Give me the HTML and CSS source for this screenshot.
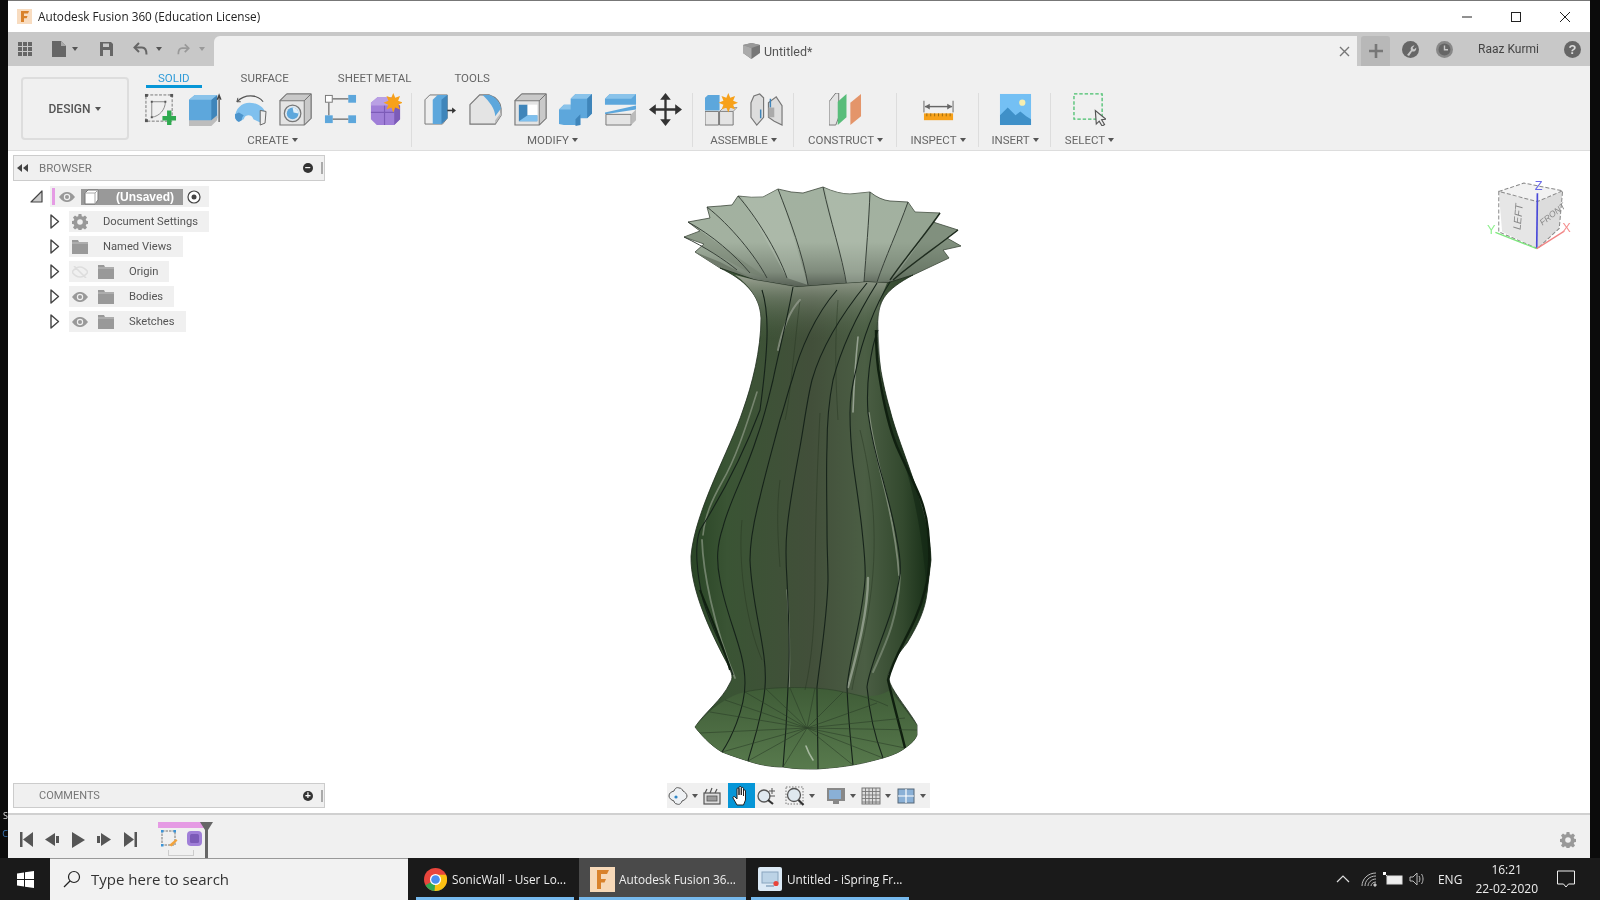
FILE: index.html
```html
<!DOCTYPE html>
<html lang="en">
<head>
  <meta charset="UTF-8" />
  <title>Autodesk Fusion 360 (Education License)</title>
  <link rel="stylesheet" href="styles.css">
</head>
<body>
  <svg class="sprites" width="0" height="0">
    <symbol id="eye" viewBox="0 0 16 10">
      <path d="M0 5C3 1 5.500 0 8 0s5 1 8 5c-3 4-5.500 5-8 5S3 9 0 5z" fill="#999"/>
      <circle cx="8" cy="5" r="3.200" fill="#f0f0f0"/>
      <circle cx="8" cy="5" r="2" fill="#999"/>
    </symbol>
    <symbol id="folder" viewBox="0 0 16 14">
      <path d="M0 0h6l1 2h9v12H0z" fill="#999"/>
      <path d="M0 3h16" stroke="#ccc" stroke-width=".8"/>
    </symbol>
    <symbol id="arrow" viewBox="0 0 10 15">
      <path d="M1 1l7.500 6.500L1 14z" fill="#fff" stroke="#444" stroke-width="1.400" stroke-linejoin="round"/>
    </symbol>
    <symbol id="gear" viewBox="0 0 16 16">
      <path d="M6.600 0h2.800l.4 2.200 1.300.6 1.900-1.300 2 2-1.300 1.900.6 1.300 2.200.4v2.800l-2.200.4-.6 1.300 1.300 1.900-2 2-1.900-1.300-1.300.6-.4 2.200H6.600l-.4-2.200-1.300-.6L3 15.500l-2-2 1.300-1.900-.6-1.300L-.5 9.900V7.100l2.200-.4.6-1.300L1 3.500l2-2 1.900 1.300 1.300-.6z" fill="#999"/>
      <circle cx="8" cy="8" r="2.800" fill="#f0f0f0"/>
    </symbol>
  </svg>

  <div class="desktop">
    <div class="strip strip-left"><span class="strip-s">S</span><span class="strip-c">C</span></div>
    <div class="window">
      <div class="titlebar">
        <svg class="app-icon" width="15" height="15" viewBox="0 0 15 15">
          <rect width="15" height="15" fill="#f8dcc0"/>
          <path d="M4 2h8l-1 2.500H7v2.500h3.500l-.8 2.300H7V13H4z" fill="#d9822b"/>
        </svg>
        <span class="title-text">Autodesk Fusion 360 (Education License)</span>
        <div class="win-controls">
          <svg width="12" height="12" viewBox="0 0 12 12"><path d="M1 6h10" stroke="#222"/></svg>
          <svg width="12" height="12" viewBox="0 0 12 12"><rect x="1.500" y="1.500" width="9" height="9" fill="none" stroke="#222"/></svg>
          <svg width="12" height="12" viewBox="0 0 12 12"><path d="M1 1l10 10M11 1L1 11" stroke="#222"/></svg>
        </div>
      </div>

      <div class="tabbar">
        <div class="quick">
          <svg class="q-grid" width="14" height="14" viewBox="0 0 14 14" fill="#666">
            <rect width="4" height="4"/><rect x="5" width="4" height="4"/><rect x="10" width="4" height="4"/>
            <rect y="5" width="4" height="4"/><rect x="5" y="5" width="4" height="4"/><rect x="10" y="5" width="4" height="4"/>
            <rect y="10" width="4" height="4"/><rect x="5" y="10" width="4" height="4"/><rect x="10" y="10" width="4" height="4"/>
          </svg>
          <svg class="q-doc" width="14" height="16" viewBox="0 0 14 16"><path d="M0 0h9l5 5v11H0z" fill="#666"/><path d="M9 0v5h5" fill="#aaa"/></svg>
          <i class="caret"></i>
          <svg class="q-save" width="13" height="14" viewBox="0 0 13 14"><path d="M0 0h11l2 2v12H0z" fill="#666"/><rect x="3" y="1.500" width="6" height="3.500" fill="#c8c8c8"/><rect x="3" y="8" width="7" height="6" fill="#c8c8c8"/></svg>
          <svg class="q-undo" width="15" height="14" viewBox="0 0 15 14"><path d="M6 1L1.500 5.500 6 10" fill="none" stroke="#666" stroke-width="2"/><path d="M2 5.500h7c3 0 4.500 2.500 4.500 7" fill="none" stroke="#666" stroke-width="2"/></svg>
          <i class="caret caret-undo"></i>
          <svg class="q-redo" width="13" height="13" viewBox="0 0 15 14"><path d="M9 1l4.500 4.500L9 10" fill="none" stroke="#999" stroke-width="2"/><path d="M13 5.500H6c-3 0-4.500 2.500-4.500 7" fill="none" stroke="#999" stroke-width="2"/></svg>
          <i class="caret caret-light"></i>
        </div>
        <div class="doc-tab">
          <svg width="17" height="16" viewBox="0 0 17 16"><path d="M0 2l8.500-2L17 2v8l-8.500 6L0 10z" fill="#777"/><path d="M0 2l8.500 3L17 2l-8.500-2z" fill="#999"/><path d="M0 2l8.500 3v11L0 10z" fill="#aaa"/></svg>
          <span class="doc-name">Untitled*</span>
          <svg class="doc-close" width="11" height="11" viewBox="0 0 11 11"><path d="M1 1l9 9M10 1l-9 9" stroke="#777" stroke-width="1.400"/></svg>
        </div>
        <div class="new-tab">
          <svg width="14" height="14" viewBox="0 0 14 14"><path d="M7 0v14M0 7h14" stroke="#777" stroke-width="2.600"/></svg>
        </div>
        <svg class="user-icon first" width="17" height="17" viewBox="0 0 17 17"><circle cx="8.500" cy="8.500" r="8.500" fill="#666"/><path d="M5 14l4-5c-1-2 .5-4.500 3.500-4.500L10.500 7l1.500 1.500 2.300-2C14.500 10 12 11 10 10.500L7 15z" fill="#c8c8c8"/></svg>
        <svg class="user-icon" width="17" height="17" viewBox="0 0 17 17"><circle cx="8.500" cy="8.500" r="8.500" fill="#888"/><circle cx="8.500" cy="8.500" r="6" fill="#666"/><path d="M8.500 4.500v4.300h3.500" fill="none" stroke="#c8c8c8" stroke-width="1.400"/></svg>
        <span class="user-name">Raaz Kurmi</span>
        <span class="help">?</span>
      </div>

      <div class="ribbon">
        <button class="design-btn">DESIGN<i class="caret"></i></button>
        <div class="ribbon-main">
          <div class="ribbon-tabs">
            <span class="ribbon-tab active">SOLID</span>
            <span class="ribbon-tab tab-surface">SURFACE</span>
            <span class="ribbon-tab tab-sheet">SHEET METAL</span>
            <span class="ribbon-tab tab-tools">TOOLS</span>
          </div>
          <div class="groups">
            <div class="group group-create">
              <div class="tools">
                <svg class="tool" viewBox="0 0 34 34">
                  <rect x="2" y="2" width="27" height="27" fill="none" stroke="#777" stroke-width="1" stroke-dasharray="3 1.500"/>
                  <path d="M8 9h14v0C22 17 16 24 8 25z" fill="none" stroke="#888" stroke-width="1"/>
                  <g fill="#555"><rect x="1" y="1" width="3" height="3"/><rect x="27" y="1" width="3" height="3"/><rect x="1" y="27" width="3" height="3"/><rect x="7" y="8" width="2" height="2"/><rect x="21" y="8" width="2" height="2"/><rect x="7" y="24" width="2" height="2"/></g>
                  <path d="M26 18v15M19 26h14" stroke="#2eaa4f" stroke-width="4.500"/>
                </svg>
                <svg class="tool" viewBox="0 0 34 34">
                  <path d="M0 7l6-5h23v24l-6 5H0z" fill="#5da7dc"/>
                  <path d="M23 7l6-5v24l-6 5z" fill="#3f85ba"/>
                  <path d="M0 7l6-5h23l-6 5z" fill="#8ac3ea"/>
                  <path d="M0 28h23l6-5v5l-6 6H0z" fill="#bdbdbd"/>
                  <path d="M31 30V3M29 7l2-5 2 5" fill="none" stroke="#444" stroke-width="1.200"/>
                </svg>
                <svg class="tool" viewBox="0 0 34 34">
                  <path d="M1 26c0-10 7-16 15-16s15 5 16 10l-4 11-8-4c-1-3-3-4-5-4s-4 1-5 4l-5 2z" fill="#7fc0ee"/>
                  <path d="M1 22c0 3 0 6 4 8l3-2c0-2 1-4 2-5l-5-3z" fill="#4c94cc"/>
                  <path d="M27 18l6 1-1 12-5 2z" fill="#eee" stroke="#666"/>
                  <path d="M3 9C8 4 12 3 17 3s10 2 13 6" fill="none" stroke="#555" stroke-width="1.200"/>
                  <path d="M3 9l1-4M3 9l4 0" stroke="#555" stroke-width="1"/>
                </svg>
                <svg class="tool" viewBox="0 0 34 34">
                  <path d="M1 8l7-7h25v25l-7 7H1z" fill="#e4e4e4" stroke="#777" stroke-width="1.200"/>
                  <path d="M26 8l7-7v25l-7 7zM1 8l7-7h25l-7 7z" fill="#c9c9c9" stroke="#777" stroke-width="1"/>
                  <circle cx="14" cy="21" r="8.500" fill="#dfe8ef" stroke="#777" stroke-width="1.300"/>
                  <circle cx="14" cy="21" r="6" fill="#5da7dc"/>
                  <path d="M14 15a6 6 0 0 1 6 6l-5-1z" fill="#e0eef8"/>
                </svg>
                <svg class="tool" viewBox="0 0 34 34">
                  <rect x="1.500" y="2.500" width="7" height="7" fill="#fff" stroke="#777"/>
                  <rect x="25" y="2" width="8" height="8" fill="#5da7dc"/>
                  <rect x="1" y="23" width="8" height="8" fill="#5da7dc"/>
                  <rect x="25" y="23" width="8" height="8" fill="#5da7dc"/>
                  <path d="M9 6h16M5 10v13M9 27h16" stroke="#666" stroke-width="1.200"/>
                </svg>
                <svg class="tool" viewBox="0 0 34 34">
                  <path d="M2 10l7-6h14l9 9v14l-6 6H8l-6-6z" fill="#a07fd8"/>
                  <path d="M2 20h24M16 10v23" stroke="#7c5bb8" stroke-width="1.200"/>
                  <path d="M26 13l6 0v14l-6 6z" fill="#7c5bb8"/>
                  <path d="M2 10l7-6h14l3 9H2z" fill="#b9a0e4"/>
                  <path d="M25 0l2 5 5-2-2 5 5 2-5 2 2 5-5-2-2 5-2-5-5 2 2-5-5-2 5-2-2-5 5 2z" fill="#f7a11a"/>
                </svg>
              </div>
              <div class="group-label">CREATE<i class="caret"></i></div>
            </div>
            <div class="group group-modify">
              <div class="tools">
                <svg class="tool" viewBox="0 0 34 34">
                  <path d="M1 7l5-5h18v24l-5 6H1z" fill="#eee" stroke="#777"/>
                  <path d="M9 7l5-5h10v24l-6 6H9z" fill="#5da7dc"/>
                  <path d="M18 7l6-5v24l-6 6z" fill="#3f85ba"/>
                  <path d="M24 18h7" stroke="#333" stroke-width="1.600"/><path d="M29 15l4 3-4 3z" fill="#333"/>
                </svg>
                <svg class="tool" viewBox="0 0 34 34">
                  <path d="M1 12L11 2h10c7 2 12 8 12 14v7l-6 9H1z" fill="#e4e4e4" stroke="#777" stroke-width="1.200"/>
                  <path d="M14 2h7c6 2 11 7 12 14l-6 8c0-8-6-15-13-22z" fill="#5da7dc"/>
                  <path d="M27 32l6-9v-3l-6 8z" fill="#bbb"/>
                </svg>
                <svg class="tool" viewBox="0 0 34 34">
                  <path d="M1 8l7-7h25v25l-7 7H1z" fill="#e4e4e4" stroke="#777" stroke-width="1.200"/>
                  <path d="M26 8l7-7v25l-7 7zM1 8l7-7h25l-7 7z" fill="#c9c9c9" stroke="#777" stroke-width="1"/>
                  <path d="M5 12h9v11h10v6H5z" fill="#3f85ba"/>
                  <rect x="14" y="12" width="10" height="11" fill="#fff"/>
                  <path d="M5 29l9-6h10v6z" fill="#7fc0ee"/>
                </svg>
                <svg class="tool" viewBox="0 0 34 34">
                  <path d="M12 6l5-5h17v20l-5 5H22v7H5l-5-1V17l5-5h7z" fill="#5da7dc"/>
                  <path d="M12 6l5-5h17l-5 5zM0 17l5-5h7v5z" fill="#8ac3ea"/>
                  <path d="M29 6l5-5v20l-5 5zM17 27l5-5v11l-5 1z" fill="#3f85ba"/>
                </svg>
                <svg class="tool" viewBox="0 0 34 34">
                  <path d="M1 6l5-5h22l5 0v11H1z" fill="#5da7dc"/>
                  <path d="M1 6l5-5h27l-5 5z" fill="#8ac3ea"/>
                  <path d="M1 20l32-7v4L1 22z" fill="#5da7dc"/>
                  <path d="M2 22h26v11H2z" fill="#e4e4e4" stroke="#777"/>
                  <path d="M28 22l5-5v11l-5 5z" fill="#bbb"/>
                </svg>
                <svg class="tool" viewBox="0 0 34 34" fill="#333">
                  <path d="M15.800 6h2.400v22h-2.400zM6 15.800h22v2.400H6z"/>
                  <path d="M17 0l5.500 7h-11zM17 34l-5.500-7h11zM0 17l7-5.500v11zM34 17l-7 5.500v-11z"/>
                </svg>
              </div>
              <div class="group-label">MODIFY<i class="caret"></i></div>
            </div>
            <div class="group group-assemble">
              <div class="tools">
                <svg class="tool" viewBox="0 0 34 34">
                  <path d="M0 5l3-3h12v16H0z" fill="#5da7dc"/>
                  <path d="M0 19h14v14H0zM15 19h14v14H15z" fill="#e4e4e4" stroke="#777"/>
                  <path d="M15 19l4-4h14l-4 4z" fill="#ddd" stroke="#777" stroke-width=".7"/>
                  <path d="M24 0l2 5 5-2-2 5 5 2-5 2 2 5-5-2-2 5-2-5-5 2 2-5-5-2 5-2-2-5 5 2z" fill="#f7a11a"/>
                </svg>
                <svg class="tool" viewBox="0 0 34 34">
                  <path d="M1 10l3-7 6-2 4 4v20L7 33 1 25z" fill="#ddd" stroke="#777" stroke-width="1.200"/>
                  <path d="M19 10l8-6 6 9v20l-8-4-6-4z" fill="#ddd" stroke="#777" stroke-width="1.200"/>
                  <path d="M11 17v9M21 6v9" stroke="#3f85ba" stroke-width="1.500"/>
                  <rect x="19" y="15" width="6" height="10" fill="#aaa"/>
                </svg>
              </div>
              <div class="group-label">ASSEMBLE<i class="caret"></i></div>
            </div>
            <div class="group group-construct">
              <div class="tools">
                <svg class="tool" viewBox="0 0 34 34">
                  <path d="M0 9L7 0h3v25l-3 8H0z" fill="#e4e4e4" stroke="#777"/>
                  <path d="M9 33V9l9-8v24z" fill="#58bd7a"/>
                  <path d="M22 33V10l11-9v23z" fill="#e4956a"/>
                </svg>
              </div>
              <div class="group-label">CONSTRUCT<i class="caret"></i></div>
            </div>
            <div class="group group-inspect">
              <div class="tools">
                <svg class="tool" viewBox="0 0 34 34">
                  <path d="M2 8v12M32 8v12" stroke="#666"/>
                  <path d="M3 14h28" stroke="#666" stroke-width="1.500"/>
                  <path d="M3 14l5-3v6zM31 14l-5-3v6z" fill="#666"/>
                  <rect x="2" y="21" width="30" height="7" fill="#f7a11a"/>
                  <path d="M5 21v3M9 21v3M13 21v3M17 21v3M21 21v3M25 21v3M29 21v3" stroke="#9a6a10"/>
                </svg>
              </div>
              <div class="group-label">INSPECT<i class="caret"></i></div>
            </div>
            <div class="group group-insert">
              <div class="tools">
                <svg class="tool" viewBox="0 0 34 34">
                  <rect x="1" y="1" width="32" height="32" fill="#74c0f4"/>
                  <path d="M1 33V23l8-8 8 8 5-4 6 5 5 3v6z" fill="#3f90c8"/>
                  <circle cx="24" cy="10" r="3.200" fill="#f5eeb0"/>
                </svg>
              </div>
              <div class="group-label">INSERT<i class="caret"></i></div>
            </div>
            <div class="group group-select">
              <div class="tools">
                <svg class="tool" viewBox="0 0 34 34">
                  <rect x="1" y="1" width="29" height="26" fill="none" stroke="#45bf6a" stroke-width="1.300" stroke-dasharray="3.500 2"/>
                  <path d="M23 18l1 14 3-3 3 5 2.500-1.500-3-5 4.500-.5z" fill="#eee" stroke="#555" stroke-width="1.200"/>
                </svg>
              </div>
              <div class="group-label">SELECT<i class="caret"></i></div>
            </div>
          </div>
        </div>
      </div>

      <div class="canvas">
        <svg class="vase" width="300" height="590" viewBox="670 180 300 590">
          <defs>
            <linearGradient id="rimFill" x1="0" y1="0" x2="0" y2="1">
              <stop offset="0" stop-color="#a2b1a0"/>
              <stop offset=".55" stop-color="#a3b1a0"/>
              <stop offset=".85" stop-color="#7f8b7c"/>
              <stop offset="1" stop-color="#565f54"/>
            </linearGradient>
            <linearGradient id="bodyFill" gradientUnits="userSpaceOnUse" x1="691" y1="0" x2="932" y2="0">
              <stop offset="0" stop-color="#2a4526"/>
              <stop offset=".15" stop-color="#3a5434"/>
              <stop offset=".5" stop-color="#424f3a"/>
              <stop offset=".72" stop-color="#4b5e44"/>
              <stop offset=".88" stop-color="#33492e"/>
              <stop offset="1" stop-color="#152c15"/>
            </linearGradient>
            <linearGradient id="neckFill" x1="0" y1="0" x2="0" y2="1">
              <stop offset="0" stop-color="#a8ada0" stop-opacity=".9"/>
              <stop offset=".35" stop-color="#8a9484" stop-opacity=".5"/>
              <stop offset="1" stop-color="#4c6346" stop-opacity="0"/>
            </linearGradient>
            <linearGradient id="baseFill" x1="0" y1="0" x2="0" y2="1">
              <stop offset="0" stop-color="#3f5c37"/>
              <stop offset="1" stop-color="#587a4d"/>
            </linearGradient>
            <clipPath id="rimClip">
              <path d="M695,252 L704,244 684,237 700,231 688,222 710,218 707,207 Q722,206 732,205 L738,196 Q752,198 763,197 L778,189 Q792,193 803,193 L823,187 Q838,194 850,194 L870,192 Q880,200 890,201 L908,202 915,212 940,213 933,222 958,230 947,238 961,246 943,250 949,258 913,275 887,283 867,282 837,284 797,287 755,280 720,268z"/>
            </clipPath>
          </defs>

          <path class="rim" d="M695,252 L704,244 684,237 700,231 688,222 710,218 707,207 Q722,206 732,205 L738,196 Q752,198 763,197 L778,189 Q792,193 803,193 L823,187 Q838,194 850,194 L870,192 Q880,200 890,201 L908,202 915,212 940,213 933,222 958,230 947,238 961,246 943,250 949,258 913,275 887,283 867,282 837,284 797,287 755,280 720,268z" fill="url(#rimFill)" stroke="#3c463a" stroke-width=".8"/>
          <g clip-path="url(#rimClip)">
            <path d="M738,190L787,278 808,285 778,185z M823,180L847,287 864,282 870,185z" fill="#b9c6b6" opacity=".4"/>
            <path d="M684,237L750,273 767,278 688,222z" fill="#6d7a6a" opacity=".4"/>
            <path d="M940,213L893,280 913,278 965,255 965,225z" fill="#4e5f4c" opacity=".4"/>
            <path d="M908,202L877,282 890,280 940,213z" fill="#7c8b79" opacity=".35"/>
          </g>
          <g class="rim-ribs" fill="none" stroke="#39423a" stroke-width="1">
            <path d="M684,237C705,247 725,260 737,270"/>
            <path d="M688,222C712,235 735,255 750,273"/>
            <path d="M707,207C730,225 755,255 767,278"/>
            <path d="M738,196C755,215 777,250 787,278"/>
            <path d="M778,189C790,220 803,255 808,285"/>
            <path d="M823,187C830,220 842,255 847,287"/>
            <path d="M870,192C869,220 866,255 864,282"/>
            <path d="M908,202C898,230 885,258 877,282"/>
            <path d="M940,213C925,235 905,258 890,280" stroke="#1f2c1f" stroke-width="1.400"/>
            <path d="M958,230C935,248 910,265 893,280" stroke="#1f2c1f" stroke-width="1.400"/>
          </g>
          <path d="M695,252L720,262 755,280 720,268z" fill="#6f7a6b"/>

          <path id="vaseBody" d="M720,268C745,280 760,295 761,318C761,350 752,385 743,410C730,450 695,510 691,556C690,590 712,635 727,663C733,675 733,678 730,683C722,700 705,712 695,727C705,740 715,748 722,752C735,757 745,760 748,761C760,765 772,767 783,767C795,769 805,769 817,769C830,768 842,767 853,765C865,763 875,760 883,758C893,755 900,752 905,748C912,743 915,740 917,735L917,725C910,712 895,695 890,683L888,675C893,660 900,652 907,643C918,625 925,610 927,593L931,560C930,510 900,450 890,410C880,375 875,340 878,317C880,300 885,290 913,275L887,283 867,282 837,284 797,287 755,280z" fill="url(#bodyFill)" stroke="#1f2d1e" stroke-width=".8"/>
          <path d="M878,317C875,340 880,375 890,410C900,450 930,510 931,560L927,593C925,560 915,480 897,447C885,420 880,380 878,317z" fill="#122614" opacity=".6"/>
          <path d="M735,275L755,280 797,287 837,284 867,282 887,283 880,300 878,340 760,340 761,318C760,300 750,285 735,275z" fill="url(#neckFill)"/>

          <path class="base" d="M695,727C710,708 730,695 745,692C770,686 820,686 843,692C860,695 875,700 890,690L917,725V735C915,740 912,743 905,748C900,752 893,755 883,758C875,760 865,763 853,765C842,767 830,768 817,769C805,769 795,769 783,767C772,767 760,765 748,761C745,760 735,757 722,752C715,748 705,740 695,727z" fill="url(#baseFill)"/>

          <g class="thin-ribs" fill="none" stroke="#24331f" stroke-width=".8" opacity=".55">
            <path d="M820,413C817,470 815,540 815,580C815,620 812,660 805,690"/>
            <path d="M780,480C776,510 778,540 780,567"/>
            <path d="M860,430C870,470 880,530 870,600C865,640 855,670 852,690"/>
            <path d="M800,300C795,340 790,400 785,420"/>
            <path d="M742,520C738,560 745,620 762,660"/>
            <path d="M838,300C835,340 835,370 838,420"/>
          </g>
          <g class="streaks" fill="none" stroke-linecap="round" opacity=".6">
            <path d="M869,413C872,440 880,470 885,490C892,520 897,545 899,575" stroke="#a7b09f" stroke-width="1.800"/>
            <path d="M868,578C868,610 858,650 848,687" stroke="#b7c0b1" stroke-width="2.400"/>
            <path d="M900,575C898,620 885,645 873,672" stroke="#8c9a86" stroke-width="2"/>
            <path d="M787,590C790,630 790,660 789,687" stroke="#a5ad9e" stroke-width="1.400"/>
            <path d="M702,540C703,570 713,625 735,678" stroke="#9aa694" stroke-width="1.800"/>
            <path d="M757,392C745,430 735,460 722,482C712,500 705,515 703,535" stroke="#9da794" stroke-width="1.600"/>
            <path d="M858,337C855,365 854,385 853,412" stroke="#c8cfc4" stroke-width="1.600"/>
            <path d="M800,300C790,310 782,330 778,350" stroke="#a4aa9e" stroke-width="2"/>
            <path d="M806,746C808,752 811,757 813,760" stroke="#dfe6da" stroke-width="1.600"/>
          </g>
          <g class="body-ribs" fill="none" stroke="#16231a" stroke-width="1.100">
            <path d="M762,290C770,315 768,350 760,410C745,450 725,490 700,530C694,545 697,575 703,600C712,630 725,650 733,675"/>
            <path d="M793,287C785,330 778,355 773,380C768,400 765,415 757,437C745,475 730,500 723,527C717,545 716,560 720,580C727,620 745,650 745,683C745,710 730,740 722,752"/>
            <path d="M837,290C815,315 800,350 792,380C787,395 785,405 780,420C772,450 765,475 760,497C754,520 750,540 750,560C752,610 768,650 765,687C762,720 752,745 748,761"/>
            <path d="M867,283C845,310 822,345 812,380C807,400 804,425 800,447C795,475 789,505 787,530C785,550 786,565 787,580C789,620 790,660 788,687C787,715 785,745 783,767"/>
            <path d="M877,283C860,310 842,345 833,380C829,400 827,425 827,447C826,475 827,505 827,530C827,550 828,565 828,580C827,620 820,660 817,687C817,715 818,745 818,769"/>
            <path d="M890,282C875,305 862,340 856,370C852,385 850,400 850,413C850,430 851,445 853,463C856,485 860,510 862,530C864,550 866,565 865,580C862,620 850,655 847,687C848,715 851,745 853,765"/>
            <path d="M878,330C870,350 866,385 868,413C871,435 877,460 883,480C888,500 894,520 897,540C900,555 901,565 900,575C893,620 870,660 867,687C870,720 878,745 883,758"/>
            <path d="M876,330C876,350 877,365 880,380C884,405 890,430 897,447C905,465 913,480 920,497C925,510 927,520 928,530C931,560 928,580 925,590C915,630 895,650 888,680C895,710 902,735 905,748" stroke="#0f1f0f" stroke-width="2.400"/>
            <path d="M700,590C712,620 725,650 730,670" stroke="#0f1f0f" stroke-width="2"/>
          </g>
          <g class="base-lines" fill="none" stroke="#2a3c26" stroke-width=".7" opacity=".8">
            <path d="M745,692C770,686 820,686 843,692C860,695 875,700 888,706"/>
            <path d="M807,728L745,692M807,728L765,688M807,728L790,688M807,728L815,688M807,728L843,692M807,728L877,703M807,728L905,718M807,728L917,730M807,728L905,748M807,728L883,758M807,728L853,765M807,728L783,767M807,728L748,761M807,728L722,752M807,728L700,733M807,728L710,712M807,728L725,700"/>
          </g>
        </svg>

        <svg class="viewcube" width="84" height="74" viewBox="1040 530 250 220">
          <path d="M1075,570L1190,600 1190,740 1085,690z" fill="#e6e6e6"/>
          <path d="M1190,600L1265,568 1255,680 1190,740z" fill="#dcdcdc"/>
          <path d="M1075,570L1150,545 1265,568 1190,600z" fill="#f2f2f2"/>
          <path d="M1075,570L1150,545 1265,568 1190,600 1075,570V690L1190,740 1255,680 1265,568" fill="none" stroke="#888" stroke-width="3" stroke-dasharray="12 6"/>
          <text class="cube-left" transform="translate(1140,685) rotate(-85)">LEFT</text>
          <text class="cube-front" transform="translate(1205,672) rotate(-38)">FRONT</text>
          <path d="M1190,575L1188,740" stroke="#4a4ad8" stroke-width="5"/>
          <path d="M1188,740L1065,692" stroke="#7ee87e" stroke-width="4"/>
          <path d="M1188,740L1270,688" stroke="#f08585" stroke-width="4"/>
          <text class="axis axis-z" x="1182" y="566">Z</text>
          <text class="axis axis-y" x="1040" y="698">Y</text>
          <text class="axis axis-x" x="1264" y="692">X</text>
        </svg>

        <div class="browser">
          <div class="panel-head">
            <svg class="panel-back" width="11" height="8" viewBox="0 0 11 8" fill="#444"><path d="M5 0v8L0 4zM11 0v8L6 4z"/></svg>
            <span class="panel-title">BROWSER</span>
            <span class="panel-dot">&minus;</span>
            <span class="panel-grip"></span>
          </div>
          <div class="tree-row">
            <svg class="tree-corner" width="13" height="13" viewBox="0 0 13 13"><path d="M12 1v11H1z" fill="#ccc" stroke="#444" stroke-width="1.200" stroke-linejoin="round"/></svg>
            <div class="pill pill-root">
              <span class="pink-bar"></span>
              <svg class="eye" width="16" height="10"><use href="#eye"/></svg>
              <div class="root-name">
                <svg width="16" height="16" viewBox="0 0 16 16"><path d="M1 4l3-3h10v10l-3 4H1z" fill="#fff" stroke="#777"/><path d="M1 4h10v11M11 4l3-3" fill="none" stroke="#aaa"/></svg>
                <span>(Unsaved)</span>
              </div>
              <svg class="radio" width="14" height="14" viewBox="0 0 14 14"><circle cx="7" cy="7" r="6" fill="#fff" stroke="#444" stroke-width="1.200"/><circle cx="7" cy="7" r="2.500" fill="#444"/></svg>
            </div>
          </div>
          <div class="tree-row">
            <svg class="expand" width="10" height="15"><use href="#arrow"/></svg>
            <div class="pill">
              <svg width="16" height="16"><use href="#gear"/></svg>
              <span class="node-name">Document Settings</span>
            </div>
          </div>
          <div class="tree-row">
            <svg class="expand" width="10" height="15"><use href="#arrow"/></svg>
            <div class="pill">
              <svg width="16" height="14"><use href="#folder"/></svg>
              <span class="node-name">Named Views</span>
            </div>
          </div>
          <div class="tree-row">
            <svg class="expand" width="10" height="15"><use href="#arrow"/></svg>
            <div class="pill">
              <svg class="eye-off" width="16" height="12" viewBox="0 0 16 12"><path d="M0 6c3-4 5.500-5 8-5s5 1 8 5c-3 4-5.500 5-8 5S3 10 0 6zM2 0l12 12" fill="none" stroke="#ddd" stroke-width="1.600"/></svg>
              <svg class="folder-after" width="16" height="14"><use href="#folder"/></svg>
              <span class="node-name">Origin</span>
            </div>
          </div>
          <div class="tree-row">
            <svg class="expand" width="10" height="15"><use href="#arrow"/></svg>
            <div class="pill">
              <svg width="16" height="10"><use href="#eye"/></svg>
              <svg class="folder-after" width="16" height="14"><use href="#folder"/></svg>
              <span class="node-name">Bodies</span>
            </div>
          </div>
          <div class="tree-row">
            <svg class="expand" width="10" height="15"><use href="#arrow"/></svg>
            <div class="pill">
              <svg width="16" height="10"><use href="#eye"/></svg>
              <svg class="folder-after" width="16" height="14"><use href="#folder"/></svg>
              <span class="node-name">Sketches</span>
            </div>
          </div>
        </div>

        <div class="comments panel-head">
          <span class="panel-title">COMMENTS</span>
          <span class="panel-dot">+</span>
          <span class="panel-grip"></span>
        </div>

        <div class="navbar">
          <svg class="nav-tool" viewBox="0 0 20 20"><path d="M1 10c0-3 2-4 5-5 1-3 3-4 5-3 2 0 3 1 4 3 2 1 4 3 4 5s-2 4-5 5c-1 3-3 4-5 3-2 0-3-2-3-3-3-1-5-3-5-5z" fill="#eef1f4" stroke="#555" stroke-width="1"/><circle cx="8" cy="11" r="1.600" fill="#2f86c6"/></svg>
          <i class="caret"></i>
          <svg class="nav-tool" viewBox="0 0 20 20"><rect x="2" y="7" width="16" height="11" fill="#ddd" stroke="#555" stroke-width="1.200"/><rect x="5" y="10" width="10" height="5" fill="#999" stroke="#555" stroke-width=".8"/><path d="M3 7l2-4M8 7l2-5M13 7l2-4" stroke="#555" stroke-width="1.200"/></svg>
          <div class="nav-hand">
            <svg width="19" height="20" viewBox="0 0 19 20"><path d="M5 19l-4-7c-.5-1.500 1-2 2-1l2 2V3c0-1.500 2-1.500 2 0v6V1.500c0-1.500 2.300-1.500 2.300 0V9V2.500c0-1.500 2.200-1.500 2.200 0V10V5c0-1.500 2-1.500 2 0v9l-2 5z" fill="#fff" stroke="#222" stroke-width="1"/></svg>
          </div>
          <svg class="nav-tool nav-zoom" viewBox="0 0 20 20"><circle cx="8" cy="10" r="6" fill="#dfe8ef" stroke="#555" stroke-width="1.300"/><path d="M12 14l5 4" stroke="#333" stroke-width="2.200"/><path d="M16 2v6M13 5h6M13 10h6" stroke="#555" stroke-width="1"/></svg>
          <svg class="nav-tool nav-fit" viewBox="0 0 20 20"><rect x="1" y="1" width="17" height="17" fill="none" stroke="#777" stroke-dasharray="1.500 1.500"/><circle cx="9" cy="9" r="6.500" fill="#dfe8ef" stroke="#555" stroke-width="1.300"/><path d="M13.500 14l5 5" stroke="#333" stroke-width="2.200"/></svg>
          <i class="caret"></i>
          <svg class="nav-tool nav-display" viewBox="0 0 20 20"><rect x="1" y="2" width="18" height="13" fill="#888"/><rect x="3" y="4" width="12" height="9" fill="#8ab0d6"/><path d="M7 15h6v3H7z" fill="#888"/></svg>
          <i class="caret"></i>
          <svg class="nav-tool nav-grid" viewBox="0 0 20 20"><rect x="1" y="2" width="18" height="16" fill="#ddd" stroke="#777"/><path d="M1 5.500h18M1 9h18M1 12.500h18M1 16h18M4.500 2v16M8 2v16M11.500 2v16M15 2v16" stroke="#777" stroke-width=".9"/></svg>
          <i class="caret"></i>
          <svg class="nav-tool nav-views" viewBox="0 0 20 20"><rect x="2" y="3" width="16" height="14" fill="#8ab0d6" stroke="#567" stroke-width="1"/><path d="M10 3v14M2 10h16" stroke="#fff" stroke-width="1.200"/></svg>
          <i class="caret"></i>
        </div>
      </div>

      <div class="timeline">
        <svg class="tl-btn" width="13" height="15" viewBox="0 0 13 15" fill="#555"><rect width="2.500" height="15"/><path d="M13 0v15L3 7.500z"/></svg>
        <svg class="tl-btn" width="14" height="13" viewBox="0 0 14 13" fill="#555"><path d="M10 0v13L0 6.500z"/><rect x="11" y="3" width="3" height="7"/></svg>
        <svg class="tl-btn" width="13" height="16" viewBox="0 0 13 16" fill="#555"><path d="M0 0v16l13-8z"/></svg>
        <svg class="tl-btn" width="14" height="13" viewBox="0 0 14 13" fill="#555"><path d="M4 0v13l10-6.500z"/><rect y="3" width="3" height="7"/></svg>
        <svg class="tl-btn" width="13" height="15" viewBox="0 0 13 15" fill="#555"><rect x="10.500" width="2.500" height="15"/><path d="M0 0v15l10-7.500z"/></svg>
        <div class="tl-track">
          <div class="tl-bar"></div>
          <div class="tl-items">
            <svg width="17" height="17" viewBox="0 0 17 17"><rect x="1" y="1" width="13" height="14" fill="none" stroke="#777" stroke-dasharray="2.500 1"/><g fill="#3a94d8"><rect width="2.500" height="2.500"/><rect x="12.500" width="2.500" height="2.500"/><rect y="14" width="2.500" height="2.500"/></g><path d="M8 15l7-6 1.500 1.500-6 6z" fill="#f2a33c"/></svg>
            <svg width="17" height="17" viewBox="0 0 17 17"><rect x="1" y="1" width="15" height="15" rx="4" fill="#a07fd8"/><rect x="4" y="4" width="9" height="9" rx="1.500" fill="#7c5bb8"/></svg>
          </div>
          <div class="tl-bracket"></div>
          <svg class="tl-marker" width="13" height="36" viewBox="0 0 13 36" fill="#666"><path d="M0 0h13L8 8v28H5V8z"/></svg>
        </div>
        <svg class="tl-gear" width="16" height="16"><use href="#gear"/></svg>
      </div>
    </div>
    <div class="strip strip-right"></div>
  </div>

  <div class="taskbar">
    <div class="start">
      <svg width="17" height="17" viewBox="0 0 17 17" fill="#fff"><path d="M0 2.500l7-1v6.500H0zM8 1.300l9-1.300v8H8zM0 9h7v6.500l-7-1zM8 9h9v8l-9-1.300z"/></svg>
    </div>
    <div class="search">
      <svg width="18" height="18" viewBox="0 0 18 18"><circle cx="11" cy="7" r="5.500" fill="none" stroke="#222" stroke-width="1.200"/><path d="M7 11l-6 6" stroke="#222" stroke-width="1.300"/></svg>
      <span class="search-text">Type here to search</span>
    </div>
    <div class="task">
      <svg width="23" height="23" viewBox="0 0 24 24">
        <circle cx="12" cy="12" r="12" fill="#e8453c"/>
        <path d="M12 12L1.600 18A12 12 0 0 0 12 24a12 12 0 0 0 10.400-6z" fill="#31a853"/>
        <path d="M12 12l-1 12h1A12 12 0 0 0 23 7H12z" fill="#fbc012"/>
        <circle cx="12" cy="12" r="5.800" fill="#fff"/><circle cx="12" cy="12" r="4.500" fill="#4a8ef0"/>
      </svg>
      <span class="task-name">SonicWall - User Lo...</span>
    </div>
    <div class="task task-active">
      <svg width="25" height="25" viewBox="0 0 25 25"><rect width="25" height="25" fill="#f7d9b8"/><path d="M7 3h12l-2 4h-6v5h5l-1.500 3.500H11V22H7z" fill="#d9822b"/></svg>
      <span class="task-name">Autodesk Fusion 36...</span>
    </div>
    <div class="task task-spring">
      <svg width="24" height="24" viewBox="0 0 24 24"><rect width="24" height="24" rx="2" fill="#dbe9f5"/><rect x="4" y="5" width="16" height="11" fill="#bcd3e6" stroke="#8aa6bf"/><path d="M8 19h8" stroke="#8aa6bf" stroke-width="1.500"/><circle cx="18" cy="16.500" r="2.600" fill="#e8453c"/></svg>
      <span class="task-name">Untitled - iSpring Fr...</span>
    </div>
    <div class="tray">
      <svg width="16" height="16" viewBox="0 0 16 16"><path d="M2 11l6-6 6 6" fill="none" stroke="#ddd" stroke-width="1.200"/></svg>
      <svg class="tray-wifi" width="16" height="16" viewBox="0 0 16 16" fill="none" stroke="#bbb" stroke-width="1"><path d="M1 15C1 8 7 2 15 2M4 15c0-5 4-10 11-10M7 15c0-3 3-7 8-7M10 15c0-2 2-4 5-4"/><circle cx="14" cy="14" r="1.200" fill="#ddd"/></svg>
      <svg width="20" height="16" viewBox="0 0 20 16"><rect x="4" y="5" width="15" height="8" fill="#eee" stroke="#ddd"/><rect x="0" y="1" width="3" height="3" fill="#fff"/><path d="M2 3l3 3" stroke="#ddd"/></svg>
      <svg class="tray-vol" width="16" height="16" viewBox="0 0 16 16" fill="none" stroke="#bbb"><path d="M1 6h3l4-4v12l-4-4H1zM10 5c1.200 1.500 1.200 4.500 0 6M12.500 3c2 3 2 7 0 10"/></svg>
      <span class="tray-eng">ENG</span>
      <div class="clock"><span>16:21</span><span>22-02-2020</span></div>
      <svg class="notify" width="18" height="18" viewBox="0 0 18 18"><path d="M.5 1h17v13h-6L9 17l-2.500-3h-6z" fill="none" stroke="#eee"/></svg>
    </div>
  </div>
</body>
</html>
```

FILE: styles.css
```css
* {
  box-sizing: border-box;
}

html, body {
  margin: 0;
  height: 100%;
}

body {
  width: 1600px;
  height: 900px;
  overflow: hidden;
  display: flex;
  flex-direction: column;
  background: #0b0b0b;
  font-family: 'Roboto', 'Liberation Sans', sans-serif;
}

.sprites {
  position: absolute;
}

/* the source is an upscaled screen capture, everything is slightly soft */
.desktop,
.taskbar {
  filter: blur(0.4px);
}

.caret {
  display: inline-block;
  width: 0;
  height: 0;
  border-left: 3px solid transparent;
  border-right: 3px solid transparent;
  border-top: 4px solid #555;
}

.caret-light {
  border-top-color: #999;
}

.desktop {
  flex: 1;
  display: flex;
  min-height: 0;
}

.strip {
  background: #0b0b0b;
  overflow: hidden;
}

.strip-left {
  width: 8px;
  display: flex;
  flex-direction: column;
  align-items: flex-end;
  justify-content: flex-end;
  gap: 6px;
  padding-bottom: 18px;
  font: 9px/12px 'Open Sans', sans-serif;
}

.strip-s {
  color: #ddd;
}

.strip-c {
  color: #3b78b8;
}

.strip-right {
  width: 10px;
}

.window {
  flex: 1;
  display: flex;
  flex-direction: column;
  min-width: 0;
  background: #fff;
  border-top: 1px solid #777;
}

/* title bar */
.titlebar {
  height: 31px;
  display: flex;
  align-items: center;
  padding-left: 9px;
  background: #fff;
}

.title-text {
  margin-left: 6px;
  margin-top: -2px;
  font: 11.75px 'Open Sans', sans-serif;
  color: #222;
}

.win-controls {
  margin-left: auto;
  display: flex;
  gap: 37px;
  padding-right: 19px;
}

/* tab bar */
.tabbar {
  height: 34px;
  display: flex;
  align-items: stretch;
  background: #c8c8c8;
  padding-top: 4px;
}

.quick {
  width: 206px;
  display: flex;
  align-items: center;
  padding-left: 10px;
  padding-bottom: 4px;
}

.q-doc {
  margin-left: 20px;
}

.quick .caret {
  margin-left: 6px;
}

.q-save {
  margin-left: 22px;
}

.q-undo {
  margin-left: 20px;
}

.quick .caret-undo {
  margin-left: 8px;
}

.q-redo {
  margin-left: 15px;
}

.quick .caret-light {
  margin-left: 9px;
}

.doc-tab {
  width: 1143px;
  display: flex;
  align-items: center;
  padding-left: 529px;
  padding-right: 7px;
  background: #f0f0f0;
  border-top-left-radius: 6px;
}

.doc-name {
  margin-left: 4px;
  font-size: 12.5px;
  color: #555;
}

.doc-close {
  margin-left: auto;
}

.new-tab {
  width: 29px;
  margin-left: 4px;
  display: flex;
  align-items: center;
  justify-content: center;
  background: #b8b8b8;
  border-top-left-radius: 3px;
  border-top-right-radius: 3px;
}

.user-icon {
  align-self: center;
  margin-left: 17px;
  margin-top: -4px;
}

.user-icon.first {
  margin-left: 12px;
}

.user-name {
  align-self: center;
  margin-top: -4px;
  margin-left: 25px;
  width: 58px;
  font-size: 12px;
  color: #444;
  white-space: nowrap;
}

.help {
  align-self: center;
  margin-top: -4px;
  margin-left: 28px;
  width: 17px;
  height: 17px;
  border-radius: 50%;
  background: #666;
  color: #ddd;
  font: bold 13px/17px 'Liberation Sans', sans-serif;
  text-align: center;
}

/* ribbon */
.ribbon {
  height: 85px;
  display: flex;
  padding-left: 13px;
  background: #f0f0f0;
  border-bottom: 1px solid #ddd;
}

.design-btn {
  width: 108px;
  height: 63px;
  margin-top: 11px;
  padding: 0;
  background: #f0f0f0;
  border: 2px solid #ddd;
  border-radius: 4px;
  font: 500 12px 'Roboto', sans-serif;
  color: #555;
}

.design-btn .caret {
  margin-left: 5px;
  vertical-align: 2px;
}

.ribbon-main {
  display: flex;
  flex-direction: column;
  margin-left: 10px;
}

.ribbon-tabs {
  display: flex;
  height: 22px;
  padding-left: 7px;
  gap: 24px;
}

.ribbon-tab {
  height: 22px;
  padding: 5px 12px 0;
  font-size: 11.5px;
  color: #666;
  white-space: nowrap;
  word-spacing: -1px;
}

.ribbon-tab.active {
  color: #2f9bd8;
  border-bottom: 3px solid #0696d7;
}

.tab-surface {
  margin-left: 3px;
}

.tab-sheet {
  margin-left: 1px;
}

.tab-tools {
  margin-left: -5px;
}

.groups {
  display: flex;
  height: 59px;
  padding-top: 5px;
}

.group {
  display: flex;
  flex-direction: column;
  align-items: center;
  border-right: 1px solid #ddd;
  margin-right: 6px;
  padding-right: 5px;
}

.tools {
  display: flex;
  height: 42px;
}

.tool {
  width: 33px;
  height: 33px;
  margin: 0 6px;
}

.group-create {
  width: 273px;
}

.group-modify {
  width: 275px;
}

.group-assemble {
  width: 95px;
}

.group-construct {
  width: 97px;
}

.group-inspect {
  width: 76px;
}

.group-insert {
  width: 66px;
}

.group-select {
  width: 70px;
  border-right: none;
}

.group-label {
  font-size: 11.5px;
  color: #666;
  white-space: nowrap;
}

.group-label .caret {
  margin-left: 3px;
  vertical-align: 2px;
}

/* canvas */
.canvas {
  position: relative;
  flex: 1;
  min-height: 0;
  background: #fff;
}

.vase {
  position: absolute;
  left: 662px;
  top: 29px;
}

.viewcube {
  position: absolute;
  left: 1479px;
  top: 27px;
}

.cube-left {
  font: italic 32px 'Liberation Sans', sans-serif;
  fill: #888;
}

.cube-front {
  font: italic 26px 'Liberation Sans', sans-serif;
  fill: #888;
}

.axis {
  font: 38px 'Liberation Sans', sans-serif;
}

.axis-z {
  fill: #6a6ae8;
}

.axis-y {
  fill: #8ef08e;
}

.axis-x {
  fill: #f59090;
}

.browser {
  position: absolute;
  left: 5px;
  top: 4px;
  width: 312px;
}

.panel-head {
  height: 26px;
  display: flex;
  align-items: center;
  background: #f0f0f0;
  border: 1px solid #ccc;
}

.panel-back {
  margin-left: 3px;
}

.panel-title {
  margin-left: 11px;
  font-size: 11.5px;
  color: #777;
}

.comments .panel-title {
  margin-left: 25px;
  font-size: 11px;
}

.panel-dot {
  margin-left: auto;
  width: 10px;
  height: 10px;
  border-radius: 50%;
  background: #333;
  color: #fff;
  font: bold 10px/10px 'Liberation Sans', sans-serif;
  text-align: center;
}

.panel-grip {
  width: 2px;
  height: 12px;
  margin: 0 1px 0 8px;
  background: #aaa;
}

.tree-row {
  height: 25px;
  display: flex;
  align-items: center;
  padding-left: 37px;
}

.tree-row:nth-child(2) {
  margin-top: 3px;
  padding-left: 17px;
}

.expand {
  flex: none;
}

.tree-corner {
  flex: none;
}

.pill {
  height: 21px;
  display: flex;
  align-items: center;
  margin-left: 9px;
  padding: 0 11px 0 3px;
  background: #f0f0f0;
}

.pill-root {
  margin-left: 7px;
  padding: 0 8px 0 2px;
}

.pink-bar {
  width: 3px;
  height: 17px;
  background: #e59be4;
}

.pill-root .eye {
  margin-left: 4px;
}

.root-name {
  width: 102px;
  height: 16px;
  margin-left: 6px;
  padding-left: 3px;
  display: flex;
  align-items: center;
  background: #999;
  color: #fff;
  font: bold 12px 'Liberation Sans', sans-serif;
}

.root-name span {
  margin-left: 16px;
}

.radio {
  margin-left: 4px;
}

.folder-after {
  margin-left: 10px;
}

.node-name {
  margin-left: 15px;
  font-size: 11.2px;
  color: #555;
  white-space: nowrap;
}

.comments {
  position: absolute;
  left: 5px;
  bottom: 5px;
  width: 312px;
  height: 25px;
}

.navbar {
  position: absolute;
  left: 659px;
  bottom: 5px;
  width: 263px;
  height: 25px;
  display: flex;
  align-items: center;
  gap: 4px;
  padding-left: 1px;
  background: #f0f0f0;
}

.nav-tool {
  width: 20px;
  height: 20px;
  flex: none;
}

.nav-hand {
  width: 27px;
  height: 25px;
  margin-left: 2px;
  display: flex;
  align-items: center;
  justify-content: center;
  background: #0696d7;
}

.nav-zoom {
  margin-left: -3px;
}

.nav-fit {
  margin-left: 5px;
}

.nav-display {
  margin-left: 7px;
}

.nav-grid,
.nav-views {
  margin-left: 1px;
}

/* timeline */
.timeline {
  height: 45px;
  display: flex;
  align-items: center;
  padding-top: 6px;
  padding-right: 14px;
  padding-left: 11.5px;
  gap: 12.5px;
  background: #f0f0f0;
  border-top: 2px solid #d0d0d0;
}

.tl-track {
  position: relative;
  align-self: flex-start;
  width: 46px;
  height: 43px;
  margin-top: -6px;
  margin-left: 9px;
  padding-top: 7px;
}

.tl-bar {
  height: 6px;
  background: #e59be4;
}

.tl-items {
  display: flex;
  gap: 8px;
  margin: 2px 0 0 3px;
}

.tl-bracket {
  width: 26px;
  height: 6px;
  margin: 3px 0 0 10px;
  border: 1px solid #ccc;
  border-top: none;
}

.tl-marker {
  position: absolute;
  left: 42px;
  top: 7px;
}

.tl-gear {
  margin-left: auto;
}

/* taskbar */
.taskbar {
  height: 42px;
  display: flex;
  align-items: stretch;
  background: #1a1a1a;
}

.start {
  width: 50px;
  display: flex;
  align-items: center;
  justify-content: center;
}

.search {
  width: 358px;
  display: flex;
  align-items: center;
  padding-left: 13px;
  padding-bottom: 2px;
  background: #f2f2f2;
  border-top: 1px solid #999;
}

.search-text {
  margin-left: 10px;
  font: 15px 'Open Sans', sans-serif;
  color: #333;
}

.task {
  width: 158px;
  margin-left: 8px;
  display: flex;
  align-items: center;
  padding-top: 3px;
  padding-left: 8px;
  border-bottom: 3px solid #76b9ed;
  color: #eee;
  overflow: hidden;
}

.task-active {
  width: 167px;
  margin-left: 5px;
  padding-left: 11px;
  background: #4a4a4a;
}

.task-spring {
  margin-left: 5px;
  padding-left: 7px;
}

.task-name {
  margin-left: 5px;
  font: 11.8px 'Open Sans', sans-serif;
  white-space: nowrap;
}

.task-active .task-name {
  margin-left: 4px;
}

.tray {
  margin-left: auto;
  display: flex;
  align-items: center;
  gap: 8px;
  padding-right: 25px;
  color: #eee;
  font: 12px 'Open Sans', sans-serif;
}

.tray-wifi {
  margin-left: 2px;
  margin-right: -2px;
}

.tray-vol {
  margin-left: -2px;
  margin-right: 2px;
}

.tray-eng {
  margin-left: 3px;
}

.clock {
  margin-left: 5px;
  display: flex;
  flex-direction: column;
  align-items: center;
  gap: 3px;
  line-height: 16px;
}

.notify {
  margin-left: 11px;
}
```
